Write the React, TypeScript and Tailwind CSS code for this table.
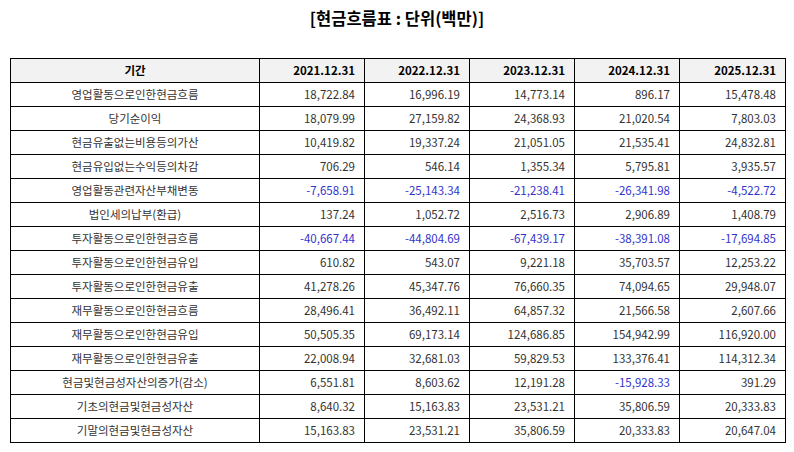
const years = ['2021.12.31', '2022.12.31', '2023.12.31', '2024.12.31', '2025.12.31']

const rows: [string, string[]][] = [
  ['영업활동으로인한현금흐름', ['18,722.84', '16,996.19', '14,773.14', '896.17', '15,478.48']],
  ['당기순이익', ['18,079.99', '27,159.82', '24,368.93', '21,020.54', '7,803.03']],
  ['현금유출없는비용등의가산', ['10,419.82', '19,337.24', '21,051.05', '21,535.41', '24,832.81']],
  ['현금유입없는수익등의차감', ['706.29', '546.14', '1,355.34', '5,795.81', '3,935.57']],
  ['영업활동관련자산부채변동', ['-7,658.91', '-25,143.34', '-21,238.41', '-26,341.98', '-4,522.72']],
  ['법인세의납부(환급)', ['137.24', '1,052.72', '2,516.73', '2,906.89', '1,408.79']],
  ['투자활동으로인한현금흐름', ['-40,667.44', '-44,804.69', '-67,439.17', '-38,391.08', '-17,694.85']],
  ['투자활동으로인한현금유입', ['610.82', '543.07', '9,221.18', '35,703.57', '12,253.22']],
  ['투자활동으로인한현금유출', ['41,278.26', '45,347.76', '76,660.35', '74,094.65', '29,948.07']],
  ['재무활동으로인한현금흐름', ['28,496.41', '36,492.11', '64,857.32', '21,566.58', '2,607.66']],
  ['재무활동으로인한현금유입', ['50,505.35', '69,173.14', '124,686.85', '154,942.99', '116,920.00']],
  ['재무활동으로인한현금유출', ['22,008.94', '32,681.03', '59,829.53', '133,376.41', '114,312.34']],
  ['현금및현금성자산의증가(감소)', ['6,551.81', '8,603.62', '12,191.28', '-15,928.33', '391.29']],
  ['기초의현금및현금성자산', ['8,640.32', '15,163.83', '23,531.21', '35,806.59', '20,333.83']],
  ['기말의현금및현금성자산', ['15,163.83', '23,531.21', '35,806.59', '20,333.83', '20,647.04']],
]

export default function App() {
  return (
    <div className="w-[794px] h-[452px] bg-white text-[#333] font-['Noto_Sans_CJK_KR','Noto_Sans',sans-serif]">
      <h1 className="pt-[6px] h-[58px] text-center text-[16.5px] font-bold text-black leading-[24px]">[현금흐름표 : 단위(백만)]</h1>
      <table className="ml-[10px] w-[775px] border-collapse table-fixed text-[11.5px]">
        <colgroup>
          <col className="w-[249px]" />
          <col className="w-[105px]" />
          <col className="w-[105px]" />
          <col className="w-[105px]" />
          <col className="w-[105px]" />
          <col className="w-[106px]" />
        </colgroup>
        <thead>
          <tr className="h-[24px] bg-[#f2f2f2] text-black">
            <th className="border border-black font-bold text-center p-0">기간</th>
            {years.map((y) => (
              <th key={y} className="border border-black font-bold text-right pr-[9px] p-0">{y}</th>
            ))}
          </tr>
        </thead>
        <tbody>
          {rows.map(([label, vals]) => (
            <tr key={label} className="h-[24px]">
              <td className="border border-black text-center p-0">{label}</td>
              {vals.map((v, i) => (
                <td key={i} className={`border border-black text-right pr-[9px] p-0 ${v.startsWith('-') ? 'text-[#3333cc]' : ''}`}>{v}</td>
              ))}
            </tr>
          ))}
        </tbody>
      </table>
    </div>
  )
}
